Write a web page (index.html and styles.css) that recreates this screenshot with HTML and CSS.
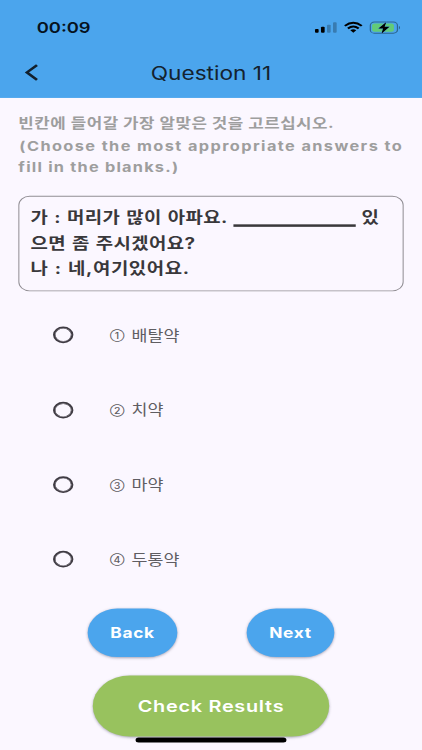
FILE: index.html
```html
<!DOCTYPE html>
<html lang="ko">
<head>
<meta charset="utf-8">
<title>Question 11</title>
<link rel="stylesheet" href="styles.css">
</head>
<body>
<div class="screen">
  <header class="top">
    <div class="status">
      <span class="time">00:09</span>
      <svg class="indicators" width="88" height="18" viewBox="0 0 88 18">
        <rect x="1" y="10.500" width="3.600" height="4.500" rx="1"/>
        <rect x="6.900" y="8" width="3.600" height="7" rx="1"/>
        <rect class="dim" x="12.800" y="5.500" width="3.600" height="9.500" rx="1"/>
        <rect class="dim" x="18.700" y="2.500" width="3.600" height="12.500" rx="1"/>
        <g class="wifi">
          <path d="M30.300 6.900Q38.600-.3 46.900 6.900"/>
          <path d="M33.300 10.100Q38.600 5.500 43.900 10.100"/>
          <path class="dot" d="M35.700 12.100Q38.600 9.800 41.500 12.100L38.600 15.100Z"/>
        </g>
        <rect class="cell" x="55.300" y="2.300" width="26.600" height="13.400" rx="4"/>
        <rect class="charge" x="57" y="4" width="21.500" height="10" rx="2.500"/>
        <path class="cap" d="M83.400 6.800q2.200 2.200 0 4.400z"/>
        <path class="bolt" d="M71 2.200L63.200 10h4.600l-1.600 6.200L74.100 8h-4.800z"/>
      </svg>
    </div>
    <div class="bar">
      <svg class="chevron" width="14" height="22" viewBox="0 0 14 22"><path d="M12.300 1.800L2.400 10.600L12.300 19.400"/></svg>
      <h1>Question 11</h1>
    </div>
  </header>
  <main>
    <div class="prompt">
      <p class="ko">빈칸에 들어갈 가장 알맞은 것을 고르십시오.</p>
      <p class="en first">(Choose the most appropriate answers to</p>
      <p class="en">fill in the blanks.)</p>
    </div>
    <div class="dialogue">
      <p>가 : 머리가 많이 아파요. <span class="blank"></span> 있</p>
      <p>으면 좀 주시겠어요?</p>
      <p>나 : 네,여기있어요.</p>
    </div>
    <div class="options">
      <div class="option"><span class="radio"></span><span class="num">①</span><span>배탈약</span></div>
      <div class="option"><span class="radio"></span><span class="num">②</span><span>치약</span></div>
      <div class="option"><span class="radio"></span><span class="num">③</span><span>마약</span></div>
      <div class="option"><span class="radio"></span><span class="num">④</span><span>두통약</span></div>
    </div>
    <div class="nav">
      <button class="back">Back</button>
      <button class="next">Next</button>
    </div>
    <button class="check">Check Results</button>
  </main>
  <div class="home"></div>
</div>
</body>
</html>
```
FILE: styles.css
```css
* { box-sizing: border-box; }
html, body { margin: 0; width: 422px; height: 750px; overflow: hidden; background: #fbf7ff; }
p, h1 { margin: 0; }

/* 414 x 896 logical screen fitted to the 422 x 750 window */
.screen {
  width: 414px;
  height: 896px;
  margin-bottom: -146px;
  overflow: hidden;
  transform: scale(1.01932, 0.83705);
  transform-origin: 0 0;
  background: #fbf7ff;
  font-family: Inter, "Noto Sans CJK KR", sans-serif;
}

.top { height: 117px; background: #4ba5ed; }
.status { display: flex; justify-content: space-between; align-items: center; height: 66px; padding: 0 18px 0 36px; }
.time { font-size: 18px; font-weight: 600; color: #06121f; }
.dim { opacity: .25; }
.wifi { fill: none; stroke: #000; stroke-width: 2.3; }
.wifi .dot { fill: #000; stroke: none; }
.cell { fill: none; stroke: #2d668f; stroke-width: 1.2; }
.charge { fill: #62ca78; }
.cap { fill: #2d668f; }
.bolt { fill: #000; stroke: #4ba5ed; stroke-width: .8; paint-order: stroke; }
.bar { display: grid; grid-template-columns: 48px 1fr 48px; align-items: center; height: 42px; }
.chevron { margin-left: 24px; fill: none; stroke: #12202d; stroke-width: 2.8; }
h1 { font-size: 22.2px; font-weight: 400; line-height: 28px; text-align: center; color: #14222f; }

main { padding: 18px 18px 0; }
.prompt { color: #9e9e9e; font-weight: 700; font-size: 16px; letter-spacing: 1.2px; white-space: nowrap; }
.prompt p { height: 25px; line-height: 26px; }
.prompt .ko { line-height: 25px; font-size: 16.5px; letter-spacing: .48px; }
.prompt .first { height: 26px; line-height: 28px; padding-left: 1px; letter-spacing: 1.38px; }

.dialogue {
  height: 114px;
  margin-top: 23px;
  padding: 11px;
  border: 1px solid #918e94;
  border-radius: 11px;
  color: #39383b;
  font-size: 18.5px;
  font-weight: 700;
  letter-spacing: .36px;
  word-spacing: 1.2px;
  white-space: nowrap;
}
.dialogue p { height: 30px; line-height: 29px; }
.dialogue p:last-child { letter-spacing: .6px; }
.blank { display: inline-block; width: 120px; height: 2.6px; background: #39383b; vertical-align: -4px; }

.options { padding-top: 7.5px; }
.option { display: flex; align-items: center; height: 89.4px; padding-left: 34px; font-size: 17px; color: #5f5d62; }
.option span + span { position: relative; top: -1px; }
.option .num { top: 1px; margin-left: 1px; width: 21px; font-size: 10.2px; font-weight: 500; }
.radio { width: 20px; height: 20px; border: 2px solid #3f3b43; box-shadow: inset 0 0 0 .5px #3f3b43; border-radius: 50%; margin-right: 35px; }

button { border: 0; padding: 0; color: #fff; font-family: Inter, sans-serif; font-weight: 700; box-shadow: 0 1px 3px rgba(40, 40, 70, .4); }
.nav { display: flex; gap: 68px; padding-left: 68px; margin-top: 14px; }
.nav button { height: 58px; border-radius: 29px; background: #4ba5ed; font-size: 17px; letter-spacing: .7px; }
.nav .back { width: 88px; }
.nav .next { width: 86px; }
.check { display: block; width: 232px; height: 73px; margin: 22px 0 0 73px; border-radius: 37px; background: #98c25e; font-size: 19.5px; font-weight: 600; letter-spacing: .7px; }
.home { position: absolute; left: 133px; top: 881px; width: 148px; height: 6px; border-radius: 3px; background: #000; }
```
